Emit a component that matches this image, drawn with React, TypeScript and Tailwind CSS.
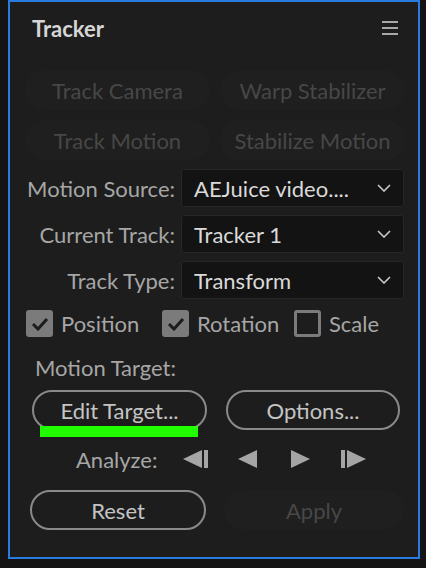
// Tracker panel (After Effects style), dark UI

const font = { fontFamily: 'Lato, "Noto Sans", sans-serif' };

function Chevron() {
  return (
    <svg width="14" height="8" viewBox="0 0 14 8" fill="none">
      <polyline points="1,1 7,7 13,1" stroke="#c9c9c9" strokeWidth="1.6" />
    </svg>
  );
}

function Dropdown({ label, value }: { label: string; value: string }) {
  return (
    <div className="flex h-[38px] items-center">
      <div className="w-[166px] pr-[1px] text-right text-[22px] text-[#a6a6a6]">{label}</div>
      <div className="ml-[5px] flex h-[38px] w-[223px] items-center justify-between rounded-[3px] border border-[#262626] bg-[#131313] pl-[12px] pr-[12px]">
        <span className="text-[22px] text-[#dadada]">{value}</span>
        <Chevron />
      </div>
    </div>
  );
}

function Check({ on, label, width }: { on: boolean; label: string; width: string }) {
  return (
    <div className={`flex items-center ${width}`}>
      {on ? (
        <div className="flex h-[27px] w-[27px] items-center justify-center rounded-[3px] bg-[#7b7b7b]">
          <svg width="18" height="14" viewBox="0 0 18 14" fill="none">
            <polyline points="2,7 7,12 16,2" stroke="#1c1c1c" strokeWidth="3" />
          </svg>
        </div>
      ) : (
        <div className="h-[27px] w-[27px] rounded-[3px] border-[3px] border-[#7b7b7b]" />
      )}
      <span className="ml-[8px] text-[22px] text-[#a6a6a6]">{label}</span>
    </div>
  );
}

function GhostButton({ label, className }: { label: string; className: string }) {
  return (
    <div className={`flex h-[40px] items-center justify-center rounded-full bg-[#1f1f1f] text-[22px] text-[#474747] ${className}`}>
      {label}
    </div>
  );
}

function PillButton({ label, className }: { label: string; className: string }) {
  return (
    <div className={`flex h-[40px] items-center justify-center rounded-full border-2 border-[#8a8a8a] text-[22px] text-[#c4c4c4] ${className}`}>
      {label}
    </div>
  );
}

export default function App() {
  return (
    <div className="h-[568px] w-[426px] overflow-hidden bg-[#141414] pl-[8px]" style={font}>
      <div className="flex h-[559px] w-[412px] flex-col border-2 border-[#2a7be0] bg-[#1d1d1d]">
        {/* header */}
        <div className="flex h-[52px] items-center justify-between pl-[22px] pr-[20px]">
          <span className="text-[22px] font-bold text-[#d6d6d6]">Tracker</span>
          <div className="flex w-[16px] flex-col gap-[4px]">
            <div className="h-[2px] bg-[#a8a8a8]" />
            <div className="h-[2px] bg-[#a8a8a8]" />
            <div className="h-[2px] bg-[#a8a8a8]" />
          </div>
        </div>

        {/* disabled actions */}
        <div className="mt-[16px] flex gap-[10px] pl-[15px]">
          <GhostButton label="Track Camera" className="w-[185px]" />
          <GhostButton label="Warp Stabilizer" className="w-[185px]" />
        </div>
        <div className="mt-[10px] flex gap-[10px] pl-[15px]">
          <GhostButton label="Track Motion" className="w-[185px]" />
          <GhostButton label="Stabilize Motion" className="w-[185px]" />
        </div>

        {/* dropdowns */}
        <div className="mt-[9px] flex flex-col gap-[8px]">
          <Dropdown label="Motion Source:" value="AEJuice video...." />
          <Dropdown label="Current Track:" value="Tracker 1" />
          <Dropdown label="Track Type:" value="Transform" />
        </div>

        {/* checkboxes */}
        <div className="mt-[11px] flex h-[27px] pl-[16px]">
          <Check on label="Position" width="w-[136px]" />
          <Check on label="Rotation" width="w-[132px]" />
          <Check on={false} label="Scale" width="w-[100px]" />
        </div>

        <div className="mt-[18px] flex h-[24px] items-center pl-[25px] text-[22px] text-[#a6a6a6]">
          Motion Target:
        </div>

        <div className="mt-[11px] flex gap-[19px] pl-[22px]">
          <div className="relative">
            <PillButton label="Edit Target..." className="w-[175px]" />
            <div className="absolute left-[8px] top-[36px] h-[11px] w-[158px] bg-[#22ff00]" />
          </div>
          <PillButton label="Options..." className="w-[174px]" />
        </div>

        {/* analyze */}
        <div className="mt-[17px] flex h-[24px] items-center pl-[66px]">
          <span className="text-[22px] text-[#a6a6a6]">Analyze:</span>
          <div className="ml-[26px] flex items-center">
            <svg width="25" height="18" viewBox="0 0 25 18">
              <polygon points="0,9 19,0 19,18" fill="#a5a5a5" />
              <rect x="21" y="0" width="4" height="18" fill="#a5a5a5" />
            </svg>
            <svg className="ml-[30px]" width="19" height="18" viewBox="0 0 19 18">
              <polygon points="0,9 19,0 19,18" fill="#a5a5a5" />
            </svg>
            <svg className="ml-[34px]" width="19" height="18" viewBox="0 0 19 18">
              <polygon points="19,9 0,0 0,18" fill="#a5a5a5" />
            </svg>
            <svg className="ml-[31px]" width="25" height="18" viewBox="0 0 25 18">
              <rect x="0" y="0" width="4" height="18" fill="#a5a5a5" />
              <polygon points="25,9 6,0 6,18" fill="#a5a5a5" />
            </svg>
          </div>
        </div>

        {/* reset / apply */}
        <div className="mt-[19px] flex gap-[18px] pl-[20px]">
          <PillButton label="Reset" className="w-[176px]" />
          <GhostButton label="Apply" className="w-[180px]" />
        </div>
      </div>
    </div>
  );
}
